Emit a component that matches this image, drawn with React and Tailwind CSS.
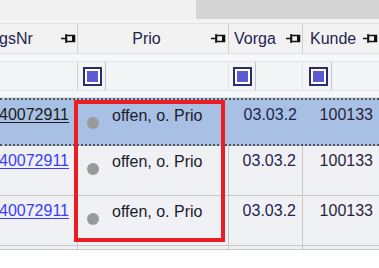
import React from "react";

const Pin = () => (
  <svg width="15" height="9" viewBox="0 0 15 9" className="shrink-0">
    <line x1="0" y1="4.5" x2="5" y2="4.5" stroke="#111" strokeWidth="1.5" />
    <line x1="5" y1="0" x2="5" y2="9" stroke="#111" strokeWidth="1.5" />
    <rect x="5.5" y="1.5" width="8" height="6" fill="none" stroke="#111" strokeWidth="1.5" />
    <rect x="11" y="1.5" width="2.5" height="6" fill="#111" />
  </svg>
);

const Check = () => (
  <div className="w-[19px] h-[19px] border-2 border-[#2c2c6c] bg-white flex items-center justify-center shrink-0">
    <div className="w-[11px] h-[11px] bg-[#5a5ad2]" />
  </div>
);

const rows = [
  { sel: true },
  { sel: false },
  { sel: false },
];

export default function App() {
  return (
    <div
      className="relative w-[379px] h-[268px] overflow-hidden bg-white text-[16px]"
      style={{ fontFamily: '"Liberation Sans", Arial, sans-serif' }}
    >
      {/* top band */}
      <div className="flex h-[19px]">
        <div className="w-[195px] bg-[#f0f0f0]" />
        <div className="flex-1 bg-[#d5d5d5] border-l border-[#f4f4f4]" />
      </div>
      <div className="h-[5px] bg-[#f3f3f3] border-b border-[#dde3ea]" />
      {/* header */}
      <div className="flex h-[30px] bg-[#f2f2f2] text-[#1f2450] border-b border-[#d9dfe8]">
        <div className="w-[78px] flex items-center justify-between pr-[1px] border-r border-[#cfcfcf]">
          <span className="-ml-[1px]">gsNr</span>
          <Pin />
        </div>
        <div className="w-[151px] flex items-center border-r border-[#cfcfcf] pr-[2px]">
          <span className="flex-1 text-center pl-[4px]">Prio</span>
          <Pin />
        </div>
        <div className="w-[74px] flex items-center justify-between pl-[5px] pr-[1px] border-r border-[#cfcfcf]">
          <span>Vorga</span>
          <Pin />
        </div>
        <div className="w-[76px] flex items-center justify-between pl-[7px] pr-[1px]">
          <span>Kunde</span>
          <Pin />
        </div>
      </div>
      <div className="h-[7px] bg-[#f6f7f9]" />
      {/* filter row */}
      <div className="flex h-[30px] bg-[#f3f4f6] border-t border-[#dfe5ee] border-b">
        <div className="w-[78px] border-r border-[#cfcfcf]" />
        <div className="w-[151px] flex items-center border-r border-[#e2e2e2]">
          <div className="ml-[5px]"><Check /></div>
          <div className="ml-[3px] h-full border-l border-[#c4c4c4]" />
        </div>
        <div className="w-[74px] flex items-center border-r border-[#e2e2e2]">
          <div className="ml-[4px]"><Check /></div>
          <div className="ml-[3px] h-full border-l border-[#c4c4c4]" />
        </div>
        <div className="w-[76px] flex items-center">
          <div className="ml-[6px]"><Check /></div>
          <div className="ml-[3px] h-full border-l border-[#c4c4c4]" />
        </div>
      </div>
      <div className="h-[7px] bg-[#f6f7f9] border-b border-[#dfe3ea]" />
      {/* data rows */}
      {rows.map((r, i) => (
        <div
          key={i}
          className={
            "flex " +
            (r.sel
              ? "h-[48px] bg-[#a8c0e3] border-y-2 border-dotted border-[#555]"
              : "h-[50px] bg-[#eff1f4] border-b border-[#c8c8c8]")
          }
        >
          <div
            className={
              "w-[78px] pt-[3px] " +
              (r.sel ? "" : "border-r border-[#c8c8c8]")
            }
          >
            <span
              className={
                "underline underline-offset-[2px] -ml-[1px] " +
                (r.sel ? "text-[#1b1b1b]" : "text-[#3c3cff]")
              }
            >
              40072911
            </span>
          </div>
          <div
            className={
              "w-[151px] relative pt-[4px] pl-[34px] text-[#1b1b2e] " +
              (r.sel ? "" : "border-r border-[#c8c8c8]")
            }
          >
            <div className="absolute left-[9px] top-[17px] w-[12px] h-[12px] rounded-full bg-[#9a9a9a]" />
            offen, o. Prio
          </div>
          <div
            className={
              "w-[74px] pt-[3px] pr-[6px] text-right text-[#1f2450] " +
              (r.sel ? "" : "border-r border-[#c8c8c8]")
            }
          >
            03.03.2
          </div>
          <div className="w-[76px] pt-[3px] pr-[6px] text-right text-[#2a1f3a]">
            100133
          </div>
        </div>
      ))}
      <div className="flex h-[4px] bg-[#eff1f4] border-b border-[#c8c8c8]">
        <div className="w-[78px] border-r border-[#c8c8c8]" />
        <div className="w-[151px] border-r border-[#c8c8c8]" />
        <div className="w-[74px] border-r border-[#c8c8c8]" />
      </div>
      {/* red annotation */}
      <div className="absolute left-[74px] top-[100px] w-[151px] h-[142px] border-4 border-[#ea1c24]" />
    </div>
  );
}
